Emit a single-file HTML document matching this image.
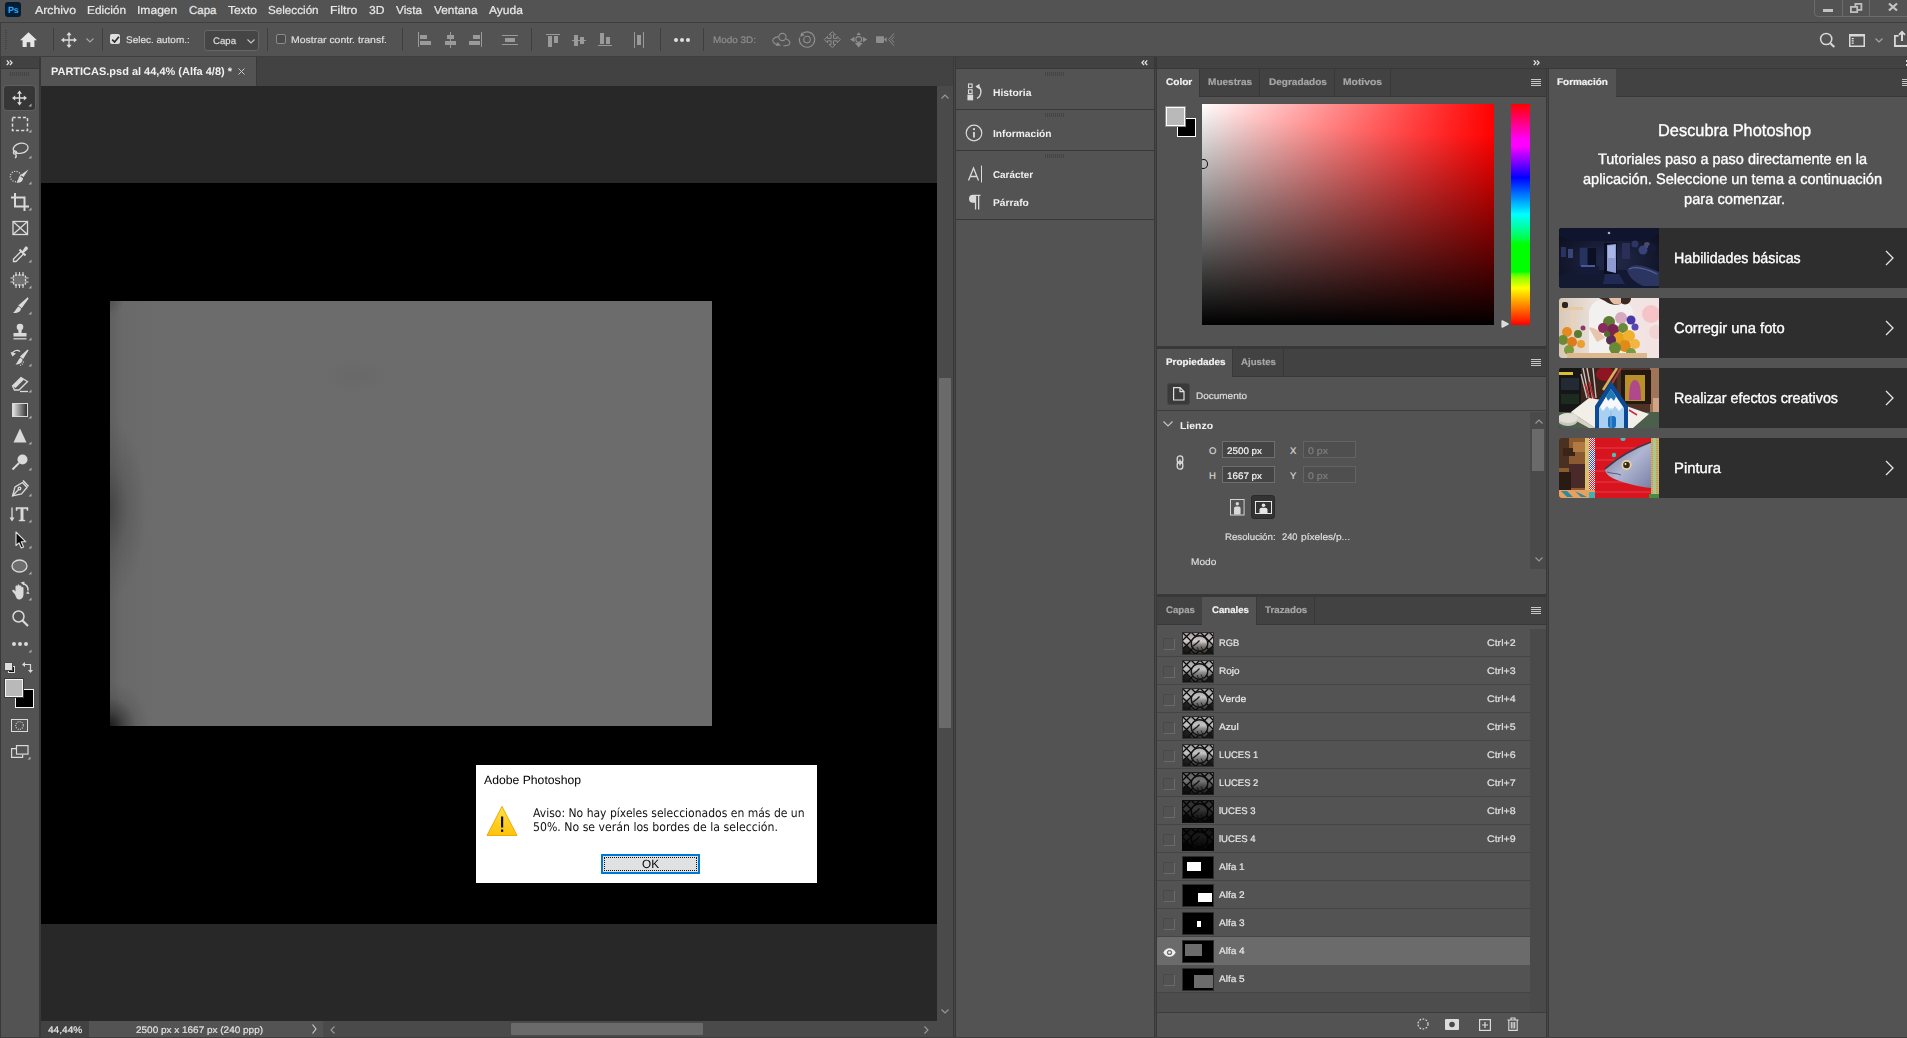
<!DOCTYPE html>
<html lang="es"><head><meta charset="utf-8"><title>PARTICAS.psd - Adobe Photoshop</title>
<style>
*{box-sizing:border-box;margin:0;padding:0}
html,body{width:1907px;height:1038px;overflow:hidden;background:#383838;font-family:"Liberation Sans",sans-serif;font-size:11px;color:#dddddd;text-rendering:geometricPrecision}
.a{position:absolute}
.t{position:absolute;white-space:nowrap;line-height:1;transform-origin:0 0}
.b{font-weight:bold}
svg{position:absolute;overflow:visible}

.menu .t{top:5.600px;font-size:11.500px;color:#e8e8e8;-webkit-text-stroke:.2px}
.sep{position:absolute;top:28px;width:1px;height:23px;background:#3f3f3f}

.grip{position:absolute;width:19px;height:4px;background:repeating-linear-gradient(to right,#444 0 1px,transparent 1px 2px)}

.card{position:absolute;left:1559px;width:348px;height:60px;background:#2e2e2e;border-radius:3px 0 0 3px}
.ct{left:1674px;font-size:15px;color:#fff;-webkit-text-stroke:.35px #fff}
.chev{left:1885px}
.th{left:1559px}
/* section styles get appended below */
</style></head><body>
<div class="a" style="left:0;top:0;width:1907px;height:22px;background:#535353"></div>
<div class="a" style="left:5px;top:2px;width:16px;height:15px;background:#001e36;border-radius:3px"></div>
<div class="t b" style="left:8px;top:6px;font-size:9px;color:#31a8ff;letter-spacing:-0.2px">Ps</div>
<div class="menu">
<span class="t" style="transform:scaleX(1.069);left:35px">Archivo</span>
<span class="t" style="transform:scaleX(1.034);left:87px">Edición</span>
<span class="t" style="transform:scaleX(1.051);left:137px">Imagen</span>
<span class="t" style="transform:scaleX(1.000);left:189px">Capa</span>
<span class="t" style="transform:scaleX(1.055);left:228px">Texto</span>
<span class="t" style="transform:scaleX(1.015);left:268px">Selección</span>
<span class="t" style="transform:scaleX(1.072);left:330px">Filtro</span>
<span class="t" style="transform:scaleX(1.054);left:369px">3D</span>
<span class="t" style="transform:scaleX(1.025);left:396px">Vista</span>
<span class="t" style="transform:scaleX(1.030);left:434px">Ventana</span>
<span class="t" style="transform:scaleX(1.049);left:489px">Ayuda</span>
</div>
<!-- window controls -->
<div class="a" style="left:1814px;top:-4px;width:98px;height:21px;border:1px solid #6c6c6c;border-radius:4px"></div>
<div class="a" style="left:1842px;top:0;width:1px;height:16px;background:#6c6c6c"></div>
<div class="a" style="left:1869px;top:0;width:1px;height:16px;background:#6c6c6c"></div>
<div class="a" style="left:1823px;top:9px;width:10px;height:3px;background:#c2c2c2"></div>
<svg style="left:1849px;top:2px" width="14" height="12" viewBox="0 0 14 12"><rect x="6.400" y="1.900" width="6" height="6" fill="none" stroke="#bebebe" stroke-width="1.800"/><rect x="1.900" y="4.900" width="6.300" height="5.200" fill="#535353" stroke="#bebebe" stroke-width="1.800"/></svg>
<svg style="left:1888px;top:3px" width="10" height="8" viewBox="0 0 10 8"><path d="M1 0.500L9 7.500M9 0.500L1 7.500" stroke="#c6c6c6" stroke-width="2.200" fill="none"/></svg>

<div class="a" style="left:0;top:22px;width:1907px;height:35px;background:#3e3e3e"></div>
<div class="a" style="left:1px;top:23px;width:1906px;height:33px;background:#535353"></div>
<div class="a" style="left:5px;top:30px;width:2px;height:20px;background:repeating-linear-gradient(to bottom,#444 0 1px,transparent 1px 2px)"></div>
<!-- home -->
<svg style="left:20px;top:32px" width="17" height="15" viewBox="0 0 17 15"><path d="M8.5 0.3L0 8.2H2.6V15H6.7V10.2H10.3V15H14.4V8.2H17Z" fill="#e6e6e6"/></svg>
<div class="sep" style="left:53px"></div>
<!-- move tool -->
<svg style="left:61px;top:32px" width="16" height="16" viewBox="0 0 16 16"><path d="M8 1.2V14.8M1.2 8H14.8" stroke="#dcdcdc" stroke-width="1.3" fill="none"/><path d="M8 0L10.6 3.2H5.4ZM8 16L10.6 12.8H5.4ZM0 8L3.2 5.4V10.6ZM16 8L12.8 5.4V10.6Z" fill="#dcdcdc"/></svg>
<svg style="left:86px;top:38px" width="8" height="5" viewBox="0 0 8 5"><path d="M0.5 0.5L4 4L7.5 0.5" stroke="#a8a8a8" stroke-width="1.1" fill="none"/></svg>
<div class="sep" style="left:102px"></div>
<div class="a" style="left:110px;top:34px;width:10px;height:10px;background:#dedede;border-radius:2px"></div>
<svg style="left:110.500px;top:34.500px" width="9" height="9" viewBox="0 0 9 9"><path d="M1.200 4.600L3.600 7L7.900 1.800" stroke="#2a2a2a" stroke-width="1.7" fill="none"/></svg>
<span class="t" style="transform:scaleX(1.050);left:126px;top:36px;font-size:9.500px;-webkit-text-stroke:.2px;color:#dedede">Selec. autom.:</span>
<div class="a" style="left:204px;top:30px;width:55px;height:21px;background:#454545;border:1px solid #666;border-radius:3px"></div>
<span class="t" style="transform:scaleX(1.012);left:213px;top:37px;font-size:9.500px;-webkit-text-stroke:.2px;color:#dedede">Capa</span>
<svg style="left:247px;top:39px" width="8" height="5" viewBox="0 0 8 5"><path d="M0.5 0.5L4 4L7.5 0.5" stroke="#c8c8c8" stroke-width="1.1" fill="none"/></svg>
<div class="sep" style="left:267px"></div>
<div class="a" style="left:276px;top:34px;width:10px;height:10px;border:1px solid #8a8a8a;border-radius:2px;background:#4a4a4a"></div>
<span class="t" style="transform:scaleX(1.102);left:291px;top:36px;font-size:9.500px;-webkit-text-stroke:.2px;color:#dedede">Mostrar contr. transf.</span>
<div class="sep" style="left:402px"></div>
<!-- align icons (dim) -->
<svg style="left:416px;top:31px" width="250" height="18" viewBox="0 0 250 18" fill="#9a9a9a">
<rect x="2" y="1" width="1" height="15"/><rect x="4" y="4" width="7" height="4"/><rect x="4" y="10" width="11" height="4"/>
<rect x="34" y="1" width="1" height="16"/><rect x="31" y="4" width="7" height="4"/><rect x="29" y="10" width="11" height="4"/>
<rect x="65" y="1" width="1" height="15"/><rect x="57" y="4" width="7" height="4"/><rect x="53" y="10" width="11" height="4"/>
<rect x="86" y="4" width="16" height="1"/><rect x="86" y="13" width="16" height="1"/><rect x="89" y="7" width="10" height="4"/>
<rect x="130" y="3" width="14" height="1"/><rect x="132" y="5" width="4" height="11"/><rect x="138" y="5" width="4" height="7"/>
<rect x="156" y="9" width="14" height="1"/><rect x="158" y="4" width="4" height="11"/><rect x="164" y="6" width="4" height="7"/>
<rect x="182" y="14" width="14" height="1"/><rect x="184" y="2" width="4" height="11"/><rect x="190" y="6" width="4" height="7"/>
<rect x="218" y="1" width="1" height="16"/><rect x="227" y="1" width="1" height="16"/><rect x="221" y="4" width="4" height="10"/>
</svg>
<div class="sep" style="left:531px"></div>
<div class="sep" style="left:660px"></div>
<div class="a" style="left:674px;top:38px;width:4px;height:4px;border-radius:2px;background:#e0e0e0;box-shadow:6px 0 0 #e0e0e0,12px 0 0 #e0e0e0"></div>
<div class="sep" style="left:703px"></div>
<span class="t" style="transform:scaleX(1.044);left:713px;top:36px;font-size:9.500px;-webkit-text-stroke:.2px;color:#8e8e8e">Modo 3D:</span>
<!-- 3D icons dim -->
<svg style="left:771px;top:31px" width="125" height="18" viewBox="0 0 125 18" fill="none" stroke="#8e8e8e" stroke-width="1.100">
<circle cx="11.400" cy="6" r="3.600"/><path d="M6.500 13.800C2.500 12.600 0.600 10 2.400 7.800C3.600 6.300 6 5.700 7.800 5.900"/><path d="M14.800 7.700C18.200 9 20 11.600 18.300 13.300C17.300 14.300 15 14.700 12.400 14.700"/><path d="M4.600 14.800H10L6.600 11Z" fill="#8e8e8e" stroke="none"/>
<circle cx="36" cy="8.600" r="3.300"/><path d="M31.200 2.600A7.700 7.700 0 1 1 28.600 6.600"/><path d="M29.200 5.800L30.200 1.600L33.600 4.200Z" fill="#8e8e8e" stroke="none"/>
<g transform="translate(61.300,8.600)"><path d="M0 -8L3.200 -4.800H1.200V-1.200H4.800V-3.200L8 0L4.800 3.200V1.200H1.200V4.800H3.200L0 8L-3.200 4.800H-1.200V1.200H-4.800V3.200L-8 0L-4.800 -3.200V-1.200H-1.200V-4.800H-3.200Z" stroke-width="1"/></g>
<g transform="translate(87.700,8.200)"><circle cx="0" cy="0.300" r="2.900"/><path d="M-8.600 0.300L-4.200 -2.400V3ZM8.600 0.300L4.200 -2.400V3ZM0 -7L2.200 -4.200H-2.200ZM0 8.300L3.900 3.900H-3.900Z" fill="#8e8e8e" stroke="none"/></g>
<rect x="105" y="5.300" width="8" height="6.600" rx="0.800" fill="#8e8e8e" stroke="none"/><path d="M113 8.600L115.600 6V11.200Z" fill="#8e8e8e" stroke="none"/><path d="M123 2.400L117.600 8.600L123 14.800M123 5.600L120.400 8.600L123 11.600" stroke-width="0.900"/>
</svg>
<!-- right icons -->
<svg style="left:1819px;top:32px" width="17" height="17" viewBox="0 0 17 17" fill="none" stroke="#d8d8d8"><circle cx="7.200" cy="7" r="5.600" stroke-width="1.500"/><path d="M11.300 11.200L15.300 15" stroke-width="2"/></svg>
<svg style="left:1849px;top:34px" width="16" height="13" viewBox="0 0 16 13" fill="none" stroke="#d8d8d8"><rect x="0.750" y="0.750" width="14.500" height="11.500" stroke-width="1.500"/><path d="M1 1.500H15" stroke-width="2"/><path d="M2.700 4.700H4.700M2.700 6.900H4.700M2.700 9.100H4.700" stroke-width="1.300" stroke="#e4e4e4"/></svg>
<svg style="left:1874.500px;top:37.500px" width="8" height="5" viewBox="0 0 8 5"><path d="M0.500 0.500L4 4L7.500 0.500" stroke="#a8a8a8" stroke-width="1.100" fill="none"/></svg>
<svg style="left:1894px;top:30px" width="14" height="17" viewBox="0 0 14 17" fill="none" stroke="#d8d8d8" stroke-width="1.800"><path d="M4.500 5.900H0.900V16H14"/><path d="M8 11V2.500" stroke-width="2"/><path d="M5 4.800L8 1.800L11 4.800" stroke-width="1.800"/></svg>

<div class="a" style="left:0;top:57px;width:41px;height:981px;background:#383838"></div>
<div class="a" style="left:1px;top:57px;width:37.500px;height:11px;background:#424242"></div>
<div class="a" style="left:1px;top:69px;width:37.500px;height:969px;background:#535353"></div>
<svg style="left:6px;top:60px" width="7" height="5.500" viewBox="0 0 8 7"><path d="M0.5 0.5L3.2 3.5L0.5 6.5M4.500 0.500L7.200 3.500L4.500 6.500" stroke="#e0e0e0" stroke-width="1.700" fill="none"/></svg>
<div class="a" style="left:10px;top:72px;width:19px;height:4px;background:repeating-linear-gradient(to right,#444 0 1px,transparent 1px 2px)"></div>
<div class="a" style="left:4px;top:86px;width:31px;height:24px;background:#363636;border-radius:3px;box-shadow:0 0 0 1px rgba(255,255,255,.07)"></div>
<svg style="left:0;top:0" width="41" height="780" viewBox="0 0 41 780"><g transform="translate(20,98)" fill="none" stroke="#dadada" stroke-width="1.300"><path d="M-0.500 -6V6M-6.500 0H5.500"/><path d="M-0.500 -7.500L2 -4.300H-3ZM-0.500 7.500L2 4.300H-3ZM-8 0L-4.800 -2.500V2.500ZM7 0L3.800 -2.500V2.500Z" fill="#dadada" stroke="none"/></g><path d="M31.500 103.5 L31.500 106.5 L28.500 106.5 Z" fill="#b0b0b0" stroke="none"/><g transform="translate(20,124)" fill="none" stroke="#dadada" stroke-width="1.300"><rect x="-7.500" y="-6.500" width="15" height="13" stroke-dasharray="3.200 2" stroke-width="1.500"/></g><path d="M31.500 129.5 L31.500 132.5 L28.500 132.5 Z" fill="#b0b0b0" stroke="none"/><g transform="translate(20,150)" fill="none" stroke="#dadada" stroke-width="1.300"><ellipse cx="1" cy="-1.500" rx="7.500" ry="5" transform="rotate(-12)"/><circle cx="-5" cy="2.500" r="1.600"/><path d="M-4.500 4C-3.500 5.500 -3.500 7 -5 8"/></g><path d="M31.500 155.5 L31.500 158.5 L28.500 158.5 Z" fill="#b0b0b0" stroke="none"/><g transform="translate(20,176)" fill="none" stroke="#dadada" stroke-width="1.300"><circle cx="-4.500" cy="0.500" r="5.200" stroke-dasharray="1.100 1.400" stroke-width="1.200"/><path d="M8.500 -6.500L3.500 1L0.500 -1Z" fill="#dadada" stroke="none"/><path d="M-0.500 0L3 2.300C3 5.500 0 7 -3.500 6.800C-1.500 5 -2 2 -0.500 0Z" fill="#dadada" stroke="none"/></g><path d="M31.500 181.5 L31.500 184.5 L28.500 184.5 Z" fill="#b0b0b0" stroke="none"/><g transform="translate(20,202)" fill="none" stroke="#dadada" stroke-width="1.300"><path d="M-5 -9V4.500H9M-9 -4.500H4.500V9" stroke-width="2"/></g><path d="M31.500 207.5 L31.500 210.5 L28.500 210.5 Z" fill="#b0b0b0" stroke="none"/><g transform="translate(20,228)" fill="none" stroke="#dadada" stroke-width="1.300"><rect x="-7" y="-6.500" width="14.500" height="13"/><path d="M-7 -6.500L7.500 6.500M7.500 -6.500L-7 6.500"/></g><g transform="translate(20,254)" fill="none" stroke="#dadada" stroke-width="1.300"><path d="M1 -2.500L-6.500 5V7.500H-4L3.500 0"/><path d="M-0.500 -4.500L5.500 1.500" stroke-width="2"/><path d="M2 -2.500L5 -7C6.500 -8.500 9 -6 7.500 -4.500L3.500 -1Z" fill="#dadada" stroke="none"/></g><path d="M31.500 259.5 L31.500 262.5 L28.500 262.5 Z" fill="#b0b0b0" stroke="none"/><g transform="translate(20,280)" fill="none" stroke="#dadada" stroke-width="1.300"><rect x="-6.500" y="-5" width="12" height="10" rx="1.500" fill="#707070" stroke-dasharray="2.200 1.200"/><path d="M-4 -8V-5M-0.500 -8V-5M3 -8V-5M-4 5V8M-0.500 5V8M3 5V8M-9.500 -2H-6.500M-9.500 2H-6.500M5.500 -2H8.500M5.500 2H8.500" stroke-width="1.100"/></g><path d="M31.500 285.5 L31.500 288.5 L28.500 288.5 Z" fill="#b0b0b0" stroke="none"/><g transform="translate(20,306)" fill="none" stroke="#dadada" stroke-width="1.300"><path d="M8 -8L1.500 1L-0.500 -0.500Z" stroke-width="1.600" fill="#dadada"/><path d="M-1.500 0.500L1 2.500C1 5.500 -2.500 7.500 -7 7C-4.500 5.500 -4 2 -1.500 0.500Z" fill="#dadada" stroke="none"/></g><path d="M31.500 311.5 L31.500 314.5 L28.500 314.5 Z" fill="#b0b0b0" stroke="none"/><g transform="translate(20,332)" fill="none" stroke="#dadada" stroke-width="1.300"><circle cx="0" cy="-5" r="3.300" fill="#dadada" stroke="none"/><path d="M-1.800 -3H1.800L1.500 1H6.500V4.500H-6.500V1H-1.500Z" fill="#dadada" stroke="none"/><path d="M-6.500 6.800H6.500" stroke-width="1.300"/></g><path d="M31.500 337.5 L31.500 340.5 L28.500 340.5 Z" fill="#b0b0b0" stroke="none"/><g transform="translate(20,358)" fill="none" stroke="#dadada" stroke-width="1.300"><path d="M8 -8L3 0L1 -1.500Z" fill="#dadada"/><path d="M0.500 -0.500L2.500 1.500C2.500 4.500 -0.500 6.500 -4.500 6.500C-2.500 5 -2 1.500 0.500 -0.500Z" fill="#dadada" stroke="none"/><path d="M-8 -3.500A5 5 0 0 1 0 -6.500" /><path d="M-9.500 -6L-7.500 -1.500L-4 -4.500Z" fill="#dadada" stroke="none"/><path d="M3.500 3.500A5.500 5.500 0 0 1 0 7.500" stroke-dasharray="1 1.200"/></g><path d="M31.500 363.5 L31.500 366.5 L28.500 366.5 Z" fill="#b0b0b0" stroke="none"/><g transform="translate(20,384)" fill="none" stroke="#dadada" stroke-width="1.300"><path d="M-7.500 2L1 -6.500L7.500 -2.500L-1 6H-5.500Z"/><path d="M-7.500 2L1 -6.500L4 -4.500L-4.500 4Z" fill="#dadada" stroke="none"/><path d="M0 7.500H8" /></g><path d="M31.500 389.5 L31.500 392.5 L28.500 392.5 Z" fill="#b0b0b0" stroke="none"/><defs><linearGradient id="tg" x1="0" x2="1"><stop offset="0" stop-color="#e8e8e8"/><stop offset="1" stop-color="#2c2c2c"/></linearGradient></defs><rect x="12.500" y="403.500" width="15" height="13" fill="url(#tg)" stroke="#dadada" stroke-width="1"/><path d="M31.500 415.5 L31.500 418.5 L28.500 418.5 Z" fill="#b0b0b0" stroke="none"/><g transform="translate(20,436)" fill="none" stroke="#dadada" stroke-width="1.300"><path d="M0 -7.500L6.500 6.500H-6.500Z" fill="#dadada" stroke="none"/></g><path d="M31.500 441.5 L31.500 444.5 L28.500 444.5 Z" fill="#b0b0b0" stroke="none"/><g transform="translate(20,462)" fill="none" stroke="#dadada" stroke-width="1.300"><circle cx="2.500" cy="-2.500" r="5" fill="#dadada" stroke="none"/><path d="M-1 1L-7.500 7.500" stroke-width="2"/></g><path d="M31.500 467.5 L31.500 470.5 L28.500 470.5 Z" fill="#b0b0b0" stroke="none"/><g transform="translate(20,488)" fill="none" stroke="#dadada" stroke-width="1.300"><path d="M-7.500 8L-5 -1L2.500 -5.500L7 -0.500L1.500 6L-7.500 8Z"/><path d="M-7.500 8L-1.500 1.500"/><circle cx="-0.500" cy="0.500" r="1.300"/><path d="M3 -7.500L8.500 -1.500" stroke-width="1.600"/></g><path d="M31.500 493.5 L31.500 496.5 L28.500 496.5 Z" fill="#b0b0b0" stroke="none"/><g transform="translate(20,514)" fill="none" stroke="#dadada" stroke-width="1.300"><path d="M-4 -6.500H8V-3.500H7C7 -5 6.500 -5.200 5.500 -5.200H3.200V5C3.200 6 3.500 6.200 5 6.200V7H-1V6.200C0.500 6.200 0.800 6 0.800 5V-5.200H-1.500C-2.500 -5.200 -3 -5 -3 -3.500H-4Z" fill="#dadada" stroke="#dadada" stroke-width="0.500"/><path d="M-8 -6.500V5.500"/><path d="M-10.500 3.500L-8 7.500L-5.500 3.500Z" fill="#dadada" stroke="none"/></g><path d="M31.500 519.5 L31.500 522.5 L28.500 522.5 Z" fill="#b0b0b0" stroke="none"/><g transform="translate(20,540)" fill="none" stroke="#dadada" stroke-width="1.300"><path d="M-4 -8V5.500L-1 2.800L1.300 8L3.600 7L1.300 1.800H5.800Z" fill="#0c0c0c" stroke="#e0e0e0" stroke-width="1.100" stroke-linejoin="round"/></g><path d="M31.500 545.5 L31.500 548.5 L28.500 548.5 Z" fill="#b0b0b0" stroke="none"/><g transform="translate(20,566)" fill="none" stroke="#dadada" stroke-width="1.300"><ellipse cx="-0.500" cy="0" rx="7.500" ry="6" fill="#6e6e6e"/></g><path d="M31.500 571.5 L31.500 574.5 L28.500 574.5 Z" fill="#b0b0b0" stroke="none"/><g transform="translate(20,592)" fill="none" stroke="#dadada" stroke-width="1.300"><path d="M-5 2.500L-7.500 -0.500C-8.500 -1.500 -7 -3 -6 -2L-4.500 -0.500V-5.500C-4.500 -7 -2.500 -7 -2.500 -5.500V-6.500C-2.500 -8 -0.500 -8 -0.500 -6.500V-5.500C-0.500 -7 1.500 -7 1.500 -5.500V-4C1.500 -5.500 3.500 -5.500 3.500 -4V2C3.500 5 2 7.500 -1 7.500C-3.500 7.500 -4 4.500 -5 2.500Z" fill="#dadada" stroke="none"/><path d="M3 -8.500A7 7 0 0 1 8 -1.500" stroke-width="1.500"/><path d="M0.500 -9.500L4.500 -10.500L4 -6.500Z" fill="#dadada" stroke="none"/><path d="M8 -1L9.500 2L6 1.500Z" fill="#dadada" stroke="none"/></g><path d="M31.500 597.5 L31.500 600.5 L28.500 600.5 Z" fill="#b0b0b0" stroke="none"/><g transform="translate(20,618)" fill="none" stroke="#dadada" stroke-width="1.300"><circle cx="-1.500" cy="-1.500" r="5.500" stroke-width="1.500"/><path d="M2.500 2.500L8 8" stroke-width="2.200"/></g><g transform="translate(20,644)" fill="none" stroke="#dadada" stroke-width="1.300"><circle cx="-6" cy="0" r="2" fill="#dadada" stroke="none"/><circle cx="0" cy="0" r="2" fill="#dadada" stroke="none"/><circle cx="6" cy="0" r="2" fill="#dadada" stroke="none"/></g><path d="M31.500 649.5 L31.500 652.5 L28.500 652.5 Z" fill="#b0b0b0" stroke="none"/></svg>
<div class="a" style="left:8px;top:666px;width:7px;height:7px;background:#111;border:1px solid #ddd"></div>
<div class="a" style="left:5px;top:663px;width:7px;height:7px;background:#dcdcdc;box-shadow:0 0 0 1px #4a4a4a"></div>
<svg style="left:22px;top:662px" width="11" height="11" viewBox="0 0 11 11" fill="none" stroke="#dadada" stroke-width="1.200"><path d="M2.500 2.500H8.500V8.500"/><path d="M0 2.500L3 0V5Z" fill="#dadada" stroke="none"/><path d="M8.500 11L6 8H11Z" fill="#dadada" stroke="none"/></svg>
<div class="a" style="left:15px;top:689px;width:19px;height:19px;background:#000;border:1px solid #f4f4f4"></div>
<div class="a" style="left:5px;top:679px;width:18px;height:18px;background:#b9b9b9;border:1px solid #f4f4f4;box-shadow:0 0 0 1px #3a3a3a"></div>
<svg style="left:11px;top:719px" width="17" height="13" viewBox="0 0 17 13" fill="none" stroke="#dadada"><rect x="0.500" y="0.500" width="16" height="12" stroke-width="1"/><circle cx="8.500" cy="6.500" r="3.800" stroke-dasharray="1 1.200" stroke-width="1.100"/></svg>
<svg style="left:11px;top:745px" width="20" height="15" viewBox="0 0 20 15" fill="none" stroke="#dadada" stroke-width="1.200"><path d="M5 3.600H0.600V12.400H11.600V9.500"/><rect x="5.500" y="0.600" width="11.500" height="8.500" fill="#535353"/><path d="M19.500 11.500V14.500H16.500Z" fill="#b0b0b0" stroke="none"/></svg>

<!-- document window -->
<div class="a" style="left:41px;top:57px;width:912px;height:29px;background:#424242"></div>
<div class="a" style="left:41px;top:57px;width:215px;height:29px;background:#535353"></div>
<div class="a" style="left:256px;top:57px;width:1px;height:28px;background:#383838"></div>
<span class="t b" style="transform:scaleX(0.998);left:51px;top:67px;font-size:11px;color:#f0f0f0">PARTICAS.psd al 44,4% (Alfa 4/8) *</span>
<svg style="left:238px;top:68px" width="7" height="7" viewBox="0 0 7 7"><path d="M0.500 0.500L6.500 6.500M6.500 0.500L0.500 6.500" stroke="#c8c8c8" stroke-width="1" fill="none"/></svg>
<div class="a" style="left:41px;top:86px;width:896px;height:935px;background:#282828"></div>
<div class="a" style="left:41px;top:183px;width:896px;height:741px;background:#000"></div>
<div class="a" style="left:110px;top:301px;width:602px;height:425px;background:#6c6c6c;overflow:hidden">
  <div class="a" style="left:0;top:0;width:50px;height:425px;background:linear-gradient(to right,rgba(60,60,60,.26),rgba(80,80,80,.10) 12px,rgba(100,100,100,0) 48px)"></div>
  <div class="a" style="left:-36px;top:118px;width:72px;height:180px;border-radius:50%;background:radial-gradient(closest-side,rgba(40,40,40,.5),rgba(60,60,60,.24) 50%,rgba(90,90,90,0))"></div>
  <div class="a" style="left:-40px;top:381px;width:80px;height:88px;border-radius:50%;background:radial-gradient(closest-side,rgba(15,15,15,.85),rgba(40,40,40,.55) 35%,rgba(60,60,60,.2) 65%,rgba(90,90,90,0))"></div>
  <div class="a" style="left:-14px;top:-14px;width:28px;height:28px;border-radius:50%;background:radial-gradient(closest-side,rgba(60,60,60,.4),rgba(80,80,80,0))"></div>
  <div class="a" style="left:210px;top:58px;width:70px;height:34px;border-radius:50%;background:radial-gradient(closest-side,rgba(102,102,102,.6),rgba(104,104,104,0))"></div>
</div>
<!-- vertical scrollbar -->
<div class="a" style="left:937px;top:86px;width:16px;height:935px;background:#4a4a4a"></div>
<svg style="left:941px;top:93.500px" width="8" height="5" viewBox="0 0 8 5"><path d="M0.500 4.500L4 1L7.500 4.500" stroke="#9a9a9a" stroke-width="1.100" fill="none"/></svg>
<svg style="left:941px;top:1009px" width="8" height="5" viewBox="0 0 8 5"><path d="M0.500 0.500L4 4L7.500 0.500" stroke="#9a9a9a" stroke-width="1.100" fill="none"/></svg>
<div class="a" style="left:939px;top:378px;width:12px;height:350px;background:#6a6a6a;border-radius:1px"></div>
<!-- status bar -->
<div class="a" style="left:41px;top:1021px;width:912px;height:17px;background:#4a4a4a"></div>
<div class="a" style="left:41px;top:1021px;width:48px;height:17px;background:#424242"></div>
<div class="a" style="left:89px;top:1021px;width:234px;height:17px;background:#535353"></div>
<span class="t" style="transform:scaleX(1.064);left:48px;top:1026px;font-size:9.500px;-webkit-text-stroke:.2px;color:#e6e6e6">44,44%</span>
<span class="t" style="transform:scaleX(1.050);left:136px;top:1026px;font-size:9.500px;-webkit-text-stroke:.2px;color:#e0e0e0">2500 px x 1667 px (240 ppp)</span>
<svg style="left:312px;top:1024px" width="5" height="10" viewBox="0 0 5 10"><path d="M0.500 0.500L4 5L0.500 9.500" stroke="#d0d0d0" stroke-width="1.100" fill="none"/></svg>
<svg style="left:330px;top:1026px" width="5" height="8" viewBox="0 0 5 8"><path d="M4.500 0.500L1 4L4.500 7.500" stroke="#9a9a9a" stroke-width="1.100" fill="none"/></svg>
<svg style="left:924px;top:1026px" width="5" height="8" viewBox="0 0 5 8"><path d="M0.500 0.500L4 4L0.500 7.500" stroke="#9a9a9a" stroke-width="1.100" fill="none"/></svg>
<div class="a" style="left:511px;top:1023px;width:192px;height:12px;background:#6a6a6a;border-radius:1px"></div>
<div class="a" style="left:954px;top:57px;width:1px;height:981px;background:#464646"></div>

<!-- collapsed icon dock -->
<div class="a" style="left:956px;top:57px;width:198px;height:11px;background:#424242"></div>
<svg style="left:1141px;top:60px" width="7" height="5.500" viewBox="0 0 8 7"><path d="M3.500 0.500L0.800 3.500L3.500 6.500M7.500 0.500L4.800 3.500L7.500 6.500" stroke="#e0e0e0" stroke-width="1.700" fill="none"/></svg>
<div class="a" style="left:956px;top:69px;width:198px;height:969px;background:#535353"></div>
<div class="a" style="left:956px;top:109px;width:198px;height:1px;background:#383838"></div>
<div class="a" style="left:956px;top:150px;width:198px;height:1px;background:#383838"></div>
<div class="a" style="left:956px;top:219px;width:198px;height:1px;background:#383838"></div>
<div class="grip" style="left:1045px;top:72px"></div>
<div class="grip" style="left:1045px;top:113px"></div>
<div class="grip" style="left:1045px;top:154px"></div>
<!-- historia icon -->
<svg style="left:967px;top:83px" width="17" height="18" viewBox="0 0 17 18" fill="none" stroke="#dadada" stroke-width="1.100"><rect x="1.500" y="1" width="3.600" height="3.600"/><rect x="1.500" y="6.800" width="3.600" height="3.600"/><rect x="1" y="12.200" width="4.600" height="4.600" fill="#dadada"/><path d="M9.500 3.500C13.500 3.500 15.500 8 12.500 13.500L10 15.500" stroke-width="1.300"/><path d="M8.500 3.500L12.500 0.800V6.200Z" fill="#dadada" stroke="none"/></svg>
<span class="t b" style="transform:scaleX(1.031);left:993px;top:89px;font-size:10px;color:#f0f0f0">Historia</span>
<svg style="left:965px;top:124px" width="18" height="18" viewBox="0 0 18 18" fill="none" stroke="#dadada" stroke-width="1.200"><circle cx="9" cy="9" r="7.800"/><path d="M9 8V13.500" stroke-width="1.800"/><circle cx="9" cy="5.200" r="1.100" fill="#dadada" stroke="none"/></svg>
<span class="t b" style="transform:scaleX(1.022);left:993px;top:130px;font-size:10px;color:#f0f0f0">Información</span>
<svg style="left:967px;top:165px" width="17" height="18" viewBox="0 0 17 18" fill="none" stroke="#dadada" stroke-width="1.300"><path d="M1.500 15.500L6.500 3L11.500 15.500M3.200 11.500H9.800"/><path d="M14.500 0.500V17.500" stroke-width="1"/></svg>
<span class="t b" style="transform:scaleX(0.985);left:993px;top:171px;font-size:10px;color:#f0f0f0">Carácter</span>
<svg style="left:968px;top:193.500px" width="14" height="16" viewBox="0 0 14 16" fill="#dadada" stroke="none"><path d="M5 0.800H12.500V2.100H11.300V15.500H10V2.100H8.200V15.500H6.900V8.800H5A4 4 0 0 1 5 0.800Z"/></svg>
<span class="t b" style="transform:scaleX(1.022);left:993px;top:199px;font-size:10px;color:#f0f0f0">Párrafo</span>
<div class="a" style="left:1155px;top:69px;width:1px;height:969px;background:#464646"></div>
<div class="a" style="left:1547px;top:69px;width:1px;height:969px;background:#464646"></div>

<div class="a" style="left:1157px;top:57px;width:750px;height:11px;background:#424242"></div>
<svg style="left:1533px;top:60px" width="7" height="5.500" viewBox="0 0 8 7"><path d="M0.500 0.500L3.200 3.500L0.500 6.500M4.500 0.500L7.200 3.500L4.500 6.500" stroke="#e0e0e0" stroke-width="1.700" fill="none"/></svg>
<div class="a" style="left:1157px;top:69px;width:389px;height:27px;background:#424242"></div>
<div class="a" style="left:1157px;top:97px;width:389px;height:249px;background:#535353"></div>
<div class="a" style="left:1157px;top:69px;width:42px;height:28px;background:#535353"></div>
<div class="a" style="left:1199px;top:69px;width:1px;height:27px;background:#383838"></div>
<span class="t b" style="transform:scaleX(1.060);left:1166px;top:78px;font-size:9.500px;-webkit-text-stroke:.2px;color:#f0f0f0">Color</span>
<div class="a" style="left:1259px;top:69px;width:1px;height:27px;background:#383838"></div>
<span class="t b" style="transform:scaleX(1.059);left:1208px;top:78px;font-size:9.500px;-webkit-text-stroke:.2px;color:#a6a6a6">Muestras</span>
<div class="a" style="left:1334px;top:69px;width:1px;height:27px;background:#383838"></div>
<span class="t b" style="transform:scaleX(1.055);left:1269px;top:78px;font-size:9.500px;-webkit-text-stroke:.2px;color:#a6a6a6">Degradados</span>
<div class="a" style="left:1390px;top:69px;width:1px;height:27px;background:#383838"></div>
<span class="t b" style="transform:scaleX(1.087);left:1343px;top:78px;font-size:9.500px;-webkit-text-stroke:.2px;color:#a6a6a6">Motivos</span>
<div class="a" style="left:1531px;top:79px;width:10px;height:7px;background:repeating-linear-gradient(to bottom,#c8c8c8 0 1px,transparent 1px 2px)"></div>
<div class="a" style="left:1177px;top:118px;width:19px;height:19px;background:#000;border:1px solid #fff"></div>
<div class="a" style="left:1165px;top:106px;width:21px;height:21px;background:#b9b9b9;border:1px solid #8c8c8c;box-shadow:inset 0 0 0 1px #fff"></div>
<svg width="0" height="0" style="left:0;top:0"><defs><filter id="cm" x="0" y="0" width="1" height="1" color-interpolation-filters="linearRGB"><feColorMatrix type="matrix" values="1.3984 -0.3984 0 0 0  0 1 0 0 0  0 -0.0429 1.0429 0 0  0 0 0 1 0"/></filter></defs></svg>
<div class="a" style="left:1202px;top:104px;width:292px;height:221px;background:linear-gradient(to bottom,rgba(0,0,0,0),#000),linear-gradient(to right,#fff,#f00);filter:url(#cm)"></div>
<div class="a" style="left:1199px;top:159px;width:9px;height:10px;border:1px solid #111;border-radius:50%;clip-path:inset(0 0 0 3px)"></div>
<div class="a" style="left:1511px;top:104px;width:19px;height:221px;background:linear-gradient(to bottom,#f00 0%,#f0f 16.700%,#00f 33.300%,#0ff 50%,#0f0 66.700%,#ff0 83.300%,#f00 100%);filter:url(#cm)"></div>
<svg style="left:1501px;top:320px" width="8" height="8" viewBox="0 0 8 8"><path d="M1.200 1L7 4L1.200 7Z" fill="#dcdcdc" stroke="#dcdcdc" stroke-width="1.600" stroke-linejoin="round"/></svg>
<div class="a" style="left:1157px;top:349px;width:389px;height:27px;background:#424242"></div>
<div class="a" style="left:1157px;top:377px;width:389px;height:217px;background:#535353"></div>
<div class="a" style="left:1157px;top:349px;width:75px;height:28px;background:#535353"></div>
<div class="a" style="left:1232px;top:349px;width:1px;height:27px;background:#383838"></div>
<span class="t b" style="transform:scaleX(1.045);left:1166px;top:358px;font-size:9.500px;-webkit-text-stroke:.2px;color:#f0f0f0">Propiedades</span>
<div class="a" style="left:1283px;top:349px;width:1px;height:27px;background:#383838"></div>
<span class="t b" style="transform:scaleX(1.020);left:1241px;top:358px;font-size:9.500px;-webkit-text-stroke:.2px;color:#a6a6a6">Ajustes</span>
<div class="a" style="left:1531px;top:359px;width:10px;height:7px;background:repeating-linear-gradient(to bottom,#c8c8c8 0 1px,transparent 1px 2px)"></div>
<div class="a" style="left:1167px;top:383px;width:23px;height:22px;background:#3a3a3a;border-radius:3px;border:1px solid #454545"></div>
<svg style="left:1173px;top:387px" width="12" height="14" viewBox="0 0 12 14" fill="none" stroke="#e0e0e0" stroke-width="1.200"><path d="M0.600 0.600H7L11 4.600V13H0.600Z"/><path d="M7 0.600V4.600H11"/></svg>
<span class="t" style="transform:scaleX(1.050);left:1196px;top:392px;font-size:9.500px;-webkit-text-stroke:.2px;color:#dcdcdc">Documento</span>
<div class="a" style="left:1157px;top:410px;width:389px;height:1px;background:#3c3c3c"></div>
<svg style="left:1163px;top:421px" width="10" height="6" viewBox="0 0 10 6"><path d="M0.500 0.500L5 5L9.500 0.500" stroke="#c8c8c8" stroke-width="1.100" fill="none"/></svg>
<span class="t b" style="transform:scaleX(1.042);left:1180px;top:422px;font-size:10px;color:#f0f0f0">Lienzo</span>
<div class="a" style="left:1530px;top:412px;width:16px;height:157px;background:#4a4a4a"></div>
<div class="a" style="left:1532px;top:429px;width:12px;height:42px;background:#6a6a6a"></div>
<svg style="left:1535px;top:419px" width="8" height="5" viewBox="0 0 8 5"><path d="M0.500 4.500L4 1L7.500 4.500" stroke="#9a9a9a" stroke-width="1.100" fill="none"/></svg>
<svg style="left:1535px;top:557px" width="8" height="5" viewBox="0 0 8 5"><path d="M0.500 0.500L4 4L7.500 0.500" stroke="#9a9a9a" stroke-width="1.100" fill="none"/></svg>
<span class="t" style="left:1209px;top:447px;font-size:9.500px;-webkit-text-stroke:.2px;color:#d6d6d6">O</span>
<div class="a" style="left:1222px;top:441px;width:53px;height:17px;border:1px solid #6e6e6e;background:#454545"></div>
<span class="t" style="transform:scaleX(1.035);left:1227px;top:447px;font-size:9.500px;-webkit-text-stroke:.2px;color:#f2f2f2">2500 px</span>
<span class="t" style="left:1290px;top:447px;font-size:9.500px;-webkit-text-stroke:.2px;color:#d6d6d6">X</span>
<div class="a" style="left:1303px;top:441px;width:53px;height:17px;border:1px solid #636363;background:#4f4f4f"></div>
<span class="t" style="transform:scaleX(1.113);left:1308px;top:447px;font-size:9.500px;-webkit-text-stroke:.2px;color:#7e7e7e">0 px</span>
<span class="t" style="left:1209px;top:472px;font-size:9.500px;-webkit-text-stroke:.2px;color:#d6d6d6">H</span>
<div class="a" style="left:1222px;top:466px;width:53px;height:17px;border:1px solid #6e6e6e;background:#454545"></div>
<span class="t" style="transform:scaleX(1.035);left:1227px;top:472px;font-size:9.500px;-webkit-text-stroke:.2px;color:#f2f2f2">1667 px</span>
<span class="t" style="left:1290px;top:472px;font-size:9.500px;-webkit-text-stroke:.2px;color:#d6d6d6">Y</span>
<div class="a" style="left:1303px;top:466px;width:53px;height:17px;border:1px solid #636363;background:#4f4f4f"></div>
<span class="t" style="transform:scaleX(1.113);left:1308px;top:472px;font-size:9.500px;-webkit-text-stroke:.2px;color:#7e7e7e">0 px</span>
<svg style="left:1176px;top:455px" width="8" height="15" viewBox="0 0 8 15" fill="none" stroke="#dcdcdc" stroke-width="1.300"><rect x="1.200" y="0.800" width="5.600" height="7.500" rx="2.800"/><rect x="1.200" y="6.700" width="5.600" height="7.500" rx="2.800"/><path d="M4 4.500V10.500" stroke-width="1.400"/></svg>
<svg style="left:1229.500px;top:498.500px" width="15" height="16.500" viewBox="0 0 16 17" preserveAspectRatio="none"><rect x="0.500" y="0.500" width="14.500" height="16" fill="none" stroke="#d8d8d8" stroke-width="1"/><circle cx="7.800" cy="5" r="1.800" fill="#d8d8d8"/><path d="M4.300 16V10C4.300 8.500 5.300 7.800 6.300 7.800H9.300C10.300 7.800 11.300 8.500 11.300 10V16Z" fill="#d8d8d8"/></svg>
<div class="a" style="left:1251px;top:495px;width:24px;height:24px;background:#333;border-radius:3px;border:1px solid #2a2a2a"></div>
<svg style="left:1255px;top:501px" width="17" height="13" viewBox="0 0 17 13"><rect x="0.500" y="0.500" width="16" height="12" fill="none" stroke="#e6e6e6" stroke-width="1"/><circle cx="8.500" cy="4.300" r="1.800" fill="#e6e6e6"/><path d="M4.500 12V9C4.500 7.500 5.500 6.800 6.500 6.800H10.500C11.500 6.800 12.500 7.500 12.500 9V12Z" fill="#e6e6e6"/></svg>
<span class="t" style="transform:scaleX(1.019);left:1225px;top:533px;font-size:9.500px;-webkit-text-stroke:.2px;color:#dcdcdc">Resolución:</span>
<span class="t" style="transform:scaleX(0.977);left:1282px;top:533px;font-size:9.500px;-webkit-text-stroke:.2px;color:#dcdcdc">240</span>
<span class="t" style="transform:scaleX(1.066);left:1301px;top:533px;font-size:9.500px;-webkit-text-stroke:.2px;color:#dcdcdc">píxeles/p...</span>
<span class="t" style="transform:scaleX(1.065);left:1191px;top:558px;font-size:9.500px;-webkit-text-stroke:.2px;color:#dcdcdc">Modo</span>
<div class="a" style="left:1157px;top:597px;width:389px;height:27px;background:#424242"></div>
<div class="a" style="left:1157px;top:625px;width:389px;height:413px;background:#535353"></div>
<div class="a" style="left:1202px;top:597px;width:1px;height:27px;background:#383838"></div>
<span class="t b" style="transform:scaleX(1.010);left:1166px;top:606px;font-size:9.500px;-webkit-text-stroke:.2px;color:#a6a6a6">Capas</span>
<div class="a" style="left:1202px;top:597px;width:54px;height:28px;background:#535353"></div>
<div class="a" style="left:1256px;top:597px;width:1px;height:27px;background:#383838"></div>
<span class="t b" style="transform:scaleX(1.010);left:1212px;top:606px;font-size:9.500px;-webkit-text-stroke:.2px;color:#f0f0f0">Canales</span>
<div class="a" style="left:1314px;top:597px;width:1px;height:27px;background:#383838"></div>
<span class="t b" style="transform:scaleX(1.027);left:1265px;top:606px;font-size:9.500px;-webkit-text-stroke:.2px;color:#a6a6a6">Trazados</span>
<div class="a" style="left:1531px;top:607px;width:10px;height:7px;background:repeating-linear-gradient(to bottom,#c8c8c8 0 1px,transparent 1px 2px)"></div>
<div class="a" style="left:1530px;top:629px;width:16px;height:383px;background:#4a4a4a"></div>
<div class="a" style="left:1157px;top:993px;width:373px;height:19px;background:#4d4d4d"></div>
<div class="a" style="left:1157px;top:1012px;width:389px;height:1px;background:#3c3c3c"></div>
<svg width="0" height="0" style="left:0;top:0"><defs>
<linearGradient id="sky" x1="0" y1="0" x2="0" y2="1"><stop offset="0" stop-color="#9a9a9a"/><stop offset="0.400" stop-color="#c4c4c4"/><stop offset="0.550" stop-color="#8c8c8c"/><stop offset="0.750" stop-color="#5a5a5a"/><stop offset="1" stop-color="#1c1c1c"/></linearGradient>
<linearGradient id="skyc" x1="0" y1="0" x2="0" y2="1"><stop offset="0" stop-color="#a0949c"/><stop offset="0.400" stop-color="#d6ccc8"/><stop offset="0.550" stop-color="#8a8c90"/><stop offset="0.750" stop-color="#5c5648"/><stop offset="1" stop-color="#1c1c1a"/></linearGradient>
<pattern id="fence" width="9" height="9" patternUnits="userSpaceOnUse"><path d="M-1 -1L10 10M10 -1L-1 10" stroke="#0a0a0a" stroke-width="1.300"/></pattern>
<mask id="hole"><rect width="32" height="23" fill="#fff"/><ellipse cx="17.500" cy="11.500" rx="8" ry="7.500" fill="#000"/></mask>
<symbol id="th" viewBox="0 0 32 23"><rect width="32" height="23" fill="url(#sky)"/><rect width="32" height="23" fill="url(#fence)" mask="url(#hole)"/><path d="M0 16C3 13 6 14 8 18L10 23H0ZM22 23L26 17C28 15 30 16 32 14V23Z" fill="#141414" opacity=".85"/><ellipse cx="17.500" cy="11.500" rx="8.300" ry="7.800" fill="none" stroke="#141414" stroke-width="1.500"/><path d="M10.500 14.500L15 11L17.500 8.500" stroke="#1a1a1a" stroke-width="1.400" fill="none"/><path d="M15 15L17 19M19 14.500L21 18.500" stroke="#222" stroke-width="1"/><rect x="0.500" y="0.500" width="31" height="22" fill="none" stroke="#303030"/></symbol>
<symbol id="thc" viewBox="0 0 32 23"><rect width="32" height="23" fill="url(#skyc)"/><rect width="32" height="23" fill="url(#fence)" mask="url(#hole)"/><path d="M0 16C3 13 6 14 8 18L10 23H0ZM22 23L26 17C28 15 30 16 32 14V23Z" fill="#141414" opacity=".85"/><ellipse cx="17.500" cy="11.500" rx="8.300" ry="7.800" fill="none" stroke="#141414" stroke-width="1.500"/><path d="M10.500 14.500L15 11L17.500 8.500" stroke="#1a1a1a" stroke-width="1.400" fill="none"/><path d="M15 15L17 19M19 14.500L21 18.500" stroke="#222" stroke-width="1"/><rect x="0.500" y="0.500" width="31" height="22" fill="none" stroke="#303030"/></symbol>
</defs></svg>
<div class="a" style="left:1157px;top:656px;width:373px;height:1px;background:#454545"></div>
<div class="a" style="left:1163px;top:638px;width:12px;height:12px;border:1px solid #6a6a6a;border-top-color:#494949;border-left-color:#494949;background:#525252"></div>
<svg style="left:1182px;top:632px" width="32" height="23"><use href="#thc"/></svg>
<span class="t" style="transform:scaleX(0.986);left:1219px;top:639px;font-size:9.500px;-webkit-text-stroke:.2px;color:#e6e6e6">RGB</span>
<span class="t" style="transform:scaleX(1.117);left:1487px;top:639px;font-size:9.500px;-webkit-text-stroke:.2px;color:#e0e0e0">Ctrl+2</span>
<div class="a" style="left:1157px;top:684px;width:373px;height:1px;background:#454545"></div>
<div class="a" style="left:1163px;top:666px;width:12px;height:12px;border:1px solid #6a6a6a;border-top-color:#494949;border-left-color:#494949;background:#525252"></div>
<svg style="left:1182px;top:660px" width="32" height="23"><use href="#th"/></svg>
<span class="t" style="transform:scaleX(1.049);left:1219px;top:667px;font-size:9.500px;-webkit-text-stroke:.2px;color:#e6e6e6">Rojo</span>
<span class="t" style="transform:scaleX(1.117);left:1487px;top:667px;font-size:9.500px;-webkit-text-stroke:.2px;color:#e0e0e0">Ctrl+3</span>
<div class="a" style="left:1157px;top:712px;width:373px;height:1px;background:#454545"></div>
<div class="a" style="left:1163px;top:694px;width:12px;height:12px;border:1px solid #6a6a6a;border-top-color:#494949;border-left-color:#494949;background:#525252"></div>
<svg style="left:1182px;top:688px" width="32" height="23"><use href="#th"/></svg>
<span class="t" style="transform:scaleX(1.100);left:1219px;top:695px;font-size:9.500px;-webkit-text-stroke:.2px;color:#e6e6e6">Verde</span>
<span class="t" style="transform:scaleX(1.117);left:1487px;top:695px;font-size:9.500px;-webkit-text-stroke:.2px;color:#e0e0e0">Ctrl+4</span>
<div class="a" style="left:1157px;top:740px;width:373px;height:1px;background:#454545"></div>
<div class="a" style="left:1163px;top:722px;width:12px;height:12px;border:1px solid #6a6a6a;border-top-color:#494949;border-left-color:#494949;background:#525252"></div>
<svg style="left:1182px;top:716px" width="32" height="23"><use href="#th"/></svg>
<span class="t" style="transform:scaleX(1.071);left:1219px;top:723px;font-size:9.500px;-webkit-text-stroke:.2px;color:#e6e6e6">Azul</span>
<span class="t" style="transform:scaleX(1.117);left:1487px;top:723px;font-size:9.500px;-webkit-text-stroke:.2px;color:#e0e0e0">Ctrl+5</span>
<div class="a" style="left:1157px;top:768px;width:373px;height:1px;background:#454545"></div>
<div class="a" style="left:1163px;top:750px;width:12px;height:12px;border:1px solid #6a6a6a;border-top-color:#494949;border-left-color:#494949;background:#525252"></div>
<svg style="left:1182px;top:744px" width="32" height="23"><use href="#th"/></svg>
<span class="t" style="transform:scaleX(0.992);left:1219px;top:751px;font-size:9.500px;-webkit-text-stroke:.2px;color:#e6e6e6">LUCES 1</span>
<span class="t" style="transform:scaleX(1.117);left:1487px;top:751px;font-size:9.500px;-webkit-text-stroke:.2px;color:#e0e0e0">Ctrl+6</span>
<div class="a" style="left:1157px;top:796px;width:373px;height:1px;background:#454545"></div>
<div class="a" style="left:1163px;top:778px;width:12px;height:12px;border:1px solid #6a6a6a;border-top-color:#494949;border-left-color:#494949;background:#525252"></div>
<div class="a" style="left:1182px;top:772px;width:32px;height:23px;background:#000"></div>
<svg style="left:1182px;top:772px;opacity:0.6" width="32" height="23"><use href="#th"/></svg>
<span class="t" style="transform:scaleX(0.992);left:1219px;top:779px;font-size:9.500px;-webkit-text-stroke:.2px;color:#e6e6e6">LUCES 2</span>
<span class="t" style="transform:scaleX(1.117);left:1487px;top:779px;font-size:9.500px;-webkit-text-stroke:.2px;color:#e0e0e0">Ctrl+7</span>
<div class="a" style="left:1157px;top:824px;width:373px;height:1px;background:#454545"></div>
<div class="a" style="left:1163px;top:806px;width:12px;height:12px;border:1px solid #6a6a6a;border-top-color:#494949;border-left-color:#494949;background:#525252"></div>
<div class="a" style="left:1182px;top:800px;width:32px;height:23px;background:#000"></div>
<svg style="left:1182px;top:800px;opacity:0.28" width="32" height="23"><use href="#th"/></svg>
<span class="t" style="transform:scaleX(1.004);left:1219px;top:807px;font-size:9.500px;-webkit-text-stroke:.2px;color:#e6e6e6">lUCES 3</span>
<span class="t" style="transform:scaleX(1.117);left:1487px;top:807px;font-size:9.500px;-webkit-text-stroke:.2px;color:#e0e0e0">Ctrl+8</span>
<div class="a" style="left:1157px;top:852px;width:373px;height:1px;background:#454545"></div>
<div class="a" style="left:1163px;top:834px;width:12px;height:12px;border:1px solid #6a6a6a;border-top-color:#494949;border-left-color:#494949;background:#525252"></div>
<div class="a" style="left:1182px;top:828px;width:32px;height:23px;background:#000"></div>
<svg style="left:1182px;top:828px;opacity:0.12" width="32" height="23"><use href="#th"/></svg>
<span class="t" style="transform:scaleX(1.004);left:1219px;top:835px;font-size:9.500px;-webkit-text-stroke:.2px;color:#e6e6e6">lUCES 4</span>
<span class="t" style="transform:scaleX(1.117);left:1487px;top:835px;font-size:9.500px;-webkit-text-stroke:.2px;color:#e0e0e0">Ctrl+9</span>
<div class="a" style="left:1157px;top:880px;width:373px;height:1px;background:#454545"></div>
<div class="a" style="left:1163px;top:862px;width:12px;height:12px;border:1px solid #6a6a6a;border-top-color:#494949;border-left-color:#494949;background:#525252"></div>
<div class="a" style="left:1182px;top:856px;width:32px;height:23px;background:#000;box-shadow:inset 0 0 0 1px #2c2c2c"></div>
<div class="a" style="left:1187px;top:862px;width:14px;height:9px;background:#fff"></div>
<span class="t" style="transform:scaleX(1.058);left:1219px;top:863px;font-size:9.500px;-webkit-text-stroke:.2px;color:#e6e6e6">Alfa 1</span>
<div class="a" style="left:1157px;top:908px;width:373px;height:1px;background:#454545"></div>
<div class="a" style="left:1163px;top:890px;width:12px;height:12px;border:1px solid #6a6a6a;border-top-color:#494949;border-left-color:#494949;background:#525252"></div>
<div class="a" style="left:1182px;top:884px;width:32px;height:23px;background:#000;box-shadow:inset 0 0 0 1px #2c2c2c"></div>
<div class="a" style="left:1198px;top:893px;width:14px;height:9px;background:#fff"></div>
<span class="t" style="transform:scaleX(1.058);left:1219px;top:891px;font-size:9.500px;-webkit-text-stroke:.2px;color:#e6e6e6">Alfa 2</span>
<div class="a" style="left:1157px;top:936px;width:373px;height:1px;background:#454545"></div>
<div class="a" style="left:1163px;top:918px;width:12px;height:12px;border:1px solid #6a6a6a;border-top-color:#494949;border-left-color:#494949;background:#525252"></div>
<div class="a" style="left:1182px;top:912px;width:32px;height:23px;background:#000;box-shadow:inset 0 0 0 1px #2c2c2c"></div>
<div class="a" style="left:1197px;top:921px;width:4px;height:6px;background:#fff"></div>
<span class="t" style="transform:scaleX(1.058);left:1219px;top:919px;font-size:9.500px;-webkit-text-stroke:.2px;color:#e6e6e6">Alfa 3</span>
<div class="a" style="left:1157px;top:937px;width:373px;height:28px;background:#6b6b6b"></div>
<svg style="left:1163px;top:948px" width="13" height="9" viewBox="0 0 13 9"><path d="M0.300 4.500C2 1.500 4 0.300 6.500 0.300C9 0.300 11 1.500 12.700 4.500C11 7.500 9 8.700 6.500 8.700C4 8.700 2 7.500 0.300 4.500Z" fill="#f0f0f0"/><circle cx="6.500" cy="4.500" r="2.600" fill="#6b6b6b"/><circle cx="6.500" cy="4.500" r="1.300" fill="#f0f0f0"/></svg>
<div class="a" style="left:1182px;top:940px;width:32px;height:23px;background:#000;box-shadow:inset 0 0 0 1px #2c2c2c"></div>
<div class="a" style="left:1185px;top:944px;width:17px;height:12px;background:#6c6c6c"></div>
<span class="t" style="transform:scaleX(1.058);left:1219px;top:947px;font-size:9.500px;-webkit-text-stroke:.2px;color:#e6e6e6">Alfa 4</span>
<div class="a" style="left:1157px;top:992px;width:373px;height:1px;background:#454545"></div>
<div class="a" style="left:1163px;top:974px;width:12px;height:12px;border:1px solid #6a6a6a;border-top-color:#494949;border-left-color:#494949;background:#525252"></div>
<div class="a" style="left:1182px;top:968px;width:32px;height:23px;background:#000;box-shadow:inset 0 0 0 1px #2c2c2c"></div>
<div class="a" style="left:1194px;top:975px;width:19px;height:13px;background:#6c6c6c"></div>
<span class="t" style="transform:scaleX(1.058);left:1219px;top:975px;font-size:9.500px;-webkit-text-stroke:.2px;color:#e6e6e6">Alfa 5</span>
<svg style="left:1417px;top:1018px" width="12" height="12" viewBox="0 0 12 12"><circle cx="6" cy="6" r="5" fill="none" stroke="#dcdcdc" stroke-width="1.200" stroke-dasharray="1.800 1.400"/></svg>
<svg style="left:1445px;top:1019px" width="14" height="11" viewBox="0 0 14 11"><rect width="14" height="11" rx="1" fill="#dcdcdc"/><circle cx="7" cy="5.500" r="2.800" fill="#4a4a4a"/></svg>
<svg style="left:1479px;top:1019px" width="12" height="12" viewBox="0 0 12 12" fill="none" stroke="#dcdcdc" stroke-width="1.200"><rect x="0.600" y="0.600" width="10.800" height="10.800"/><path d="M6 3V9M3 6H9"/></svg>
<svg style="left:1507px;top:1017px" width="12" height="14" viewBox="0 0 12 14" fill="none" stroke="#dcdcdc" stroke-width="1.100"><path d="M0.500 3H11.500M4 3V1H8V3M1.800 3V13.400H10.200V3M4.300 5V11.500M6 5V11.500M7.700 5V11.500"/></svg>

<!-- Formación panel -->
<div class="a" style="left:1549px;top:69px;width:358px;height:27px;background:#424242"></div>
<div class="a" style="left:1549px;top:97px;width:358px;height:941px;background:#535353"></div>
<div class="a" style="left:1549px;top:69px;width:67px;height:28px;background:#535353"></div>
<span class="t b" style="transform:scaleX(1.046);left:1557px;top:78px;font-size:9.500px;-webkit-text-stroke:.2px;color:#f0f0f0">Formación</span>
<div class="a" style="left:1902px;top:79px;width:10px;height:7px;background:repeating-linear-gradient(to bottom,#c8c8c8 0 1px,transparent 1px 2px)"></div>
<div class="a" style="left:1905.500px;top:60px;width:3px;height:2px;background:#e0e0e0"></div>
<div class="a" style="left:1905.500px;top:63.500px;width:3px;height:2px;background:#e0e0e0"></div>
<span class="t" style="transform:scaleX(0.964);left:1658px;top:122px;font-size:17px;color:#fff;-webkit-text-stroke:.35px #fff">Descubra Photoshop</span>
<span class="t" style="transform:scaleX(0.965);left:1598px;top:152px;font-size:15px;color:#fff;-webkit-text-stroke:.35px #fff">Tutoriales paso a paso directamente en la</span>
<span class="t" style="transform:scaleX(0.972);left:1583px;top:172px;font-size:15px;color:#fff;-webkit-text-stroke:.35px #fff">aplicación. Seleccione un tema a continuación</span>
<span class="t" style="transform:scaleX(0.977);left:1684px;top:192px;font-size:15px;color:#fff;-webkit-text-stroke:.35px #fff">para comenzar.</span>
<!-- cards -->
<div class="card" style="top:228px"></div>
<div class="card" style="top:298px"></div>
<div class="card" style="top:368px"></div>
<div class="card" style="top:438px"></div>
<span class="t ct" style="transform:scaleX(0.950);top:251px">Habilidades básicas</span>
<span class="t ct" style="transform:scaleX(0.983);top:321px">Corregir una foto</span>
<span class="t ct" style="transform:scaleX(0.955);top:391px">Realizar efectos creativos</span>
<span class="t ct" style="transform:scaleX(0.989);top:461px">Pintura</span>
<svg class="chev" style="top:250px" width="9" height="16" viewBox="0 0 9 16"><path d="M1 1L8 8L1 15" stroke="#e6e6e6" stroke-width="1.300" fill="none"/></svg>
<svg class="chev" style="top:320px" width="9" height="16" viewBox="0 0 9 16"><path d="M1 1L8 8L1 15" stroke="#e6e6e6" stroke-width="1.300" fill="none"/></svg>
<svg class="chev" style="top:390px" width="9" height="16" viewBox="0 0 9 16"><path d="M1 1L8 8L1 15" stroke="#e6e6e6" stroke-width="1.300" fill="none"/></svg>
<svg class="chev" style="top:460px" width="9" height="16" viewBox="0 0 9 16"><path d="M1 1L8 8L1 15" stroke="#e6e6e6" stroke-width="1.300" fill="none"/></svg>
<!-- thumb 1: night room -->
<svg class="th" style="top:228px" width="100" height="60" viewBox="0 0 100 60">
<defs><radialGradient id="rm" cx="0.520" cy="0.550" r="0.700"><stop offset="0" stop-color="#232a4c"/><stop offset="1" stop-color="#0c0e1c"/></radialGradient><clipPath id="rc"><path d="M3 0H100V60H3A3 3 0 0 1 0 57V3A3 3 0 0 1 3 0Z"/></clipPath></defs>
<g clip-path="url(#rc)"><rect width="100" height="60" fill="url(#rm)"/>
<path d="M0 0H100V6L90 13H12L0 8Z" fill="#10142c"/><path d="M0 48L14 42H88L100 50V60H0Z" fill="#141932"/>
<rect x="20" y="19" width="18" height="20" fill="#1a2244"/><rect x="21" y="20" width="7" height="18" fill="#27335e"/><rect x="29" y="20" width="8" height="18" fill="#0c1024"/>
<rect x="45" y="15" width="13" height="31" fill="#0b0e20"/><path d="M48 17L57 16V45L48 43Z" fill="#8d9bd0"/><path d="M49 18L56 17V30L49 30Z" fill="#aab6e6"/>
<rect x="63" y="15" width="8" height="16" fill="#2a2f58"/><rect x="2" y="19" width="5" height="10" fill="#2a3260"/><rect x="9" y="21" width="5" height="9" fill="#3a4478"/>
<circle cx="76" cy="16" r="3.500" fill="#2c3564"/><circle cx="84" cy="22" r="4.500" fill="#38427a"/><circle cx="88" cy="17" r="3" fill="#4a4a6c"/><circle cx="93" cy="20" r="4" fill="#161a36"/>
<path d="M68 42C72 36 80 36 90 40L100 44V58H84C76 54 70 50 68 42Z" fill="#2c3560"/><path d="M70 41C76 38 84 39 98 46" stroke="#56629a" stroke-width="1.200" fill="none"/>
<rect x="18" y="38" width="22" height="9" fill="#141a38"/><rect x="22" y="37" width="14" height="2" fill="#4a5a98"/>
<path d="M46 46H60L66 56H44Z" fill="#2a356a" opacity=".6"/><circle cx="50" cy="5" r="1.300" fill="#9ab0e0"/>
</g></svg>
<!-- thumb 2: flowers -->
<svg class="th" style="top:298px" width="100" height="60" viewBox="0 0 100 60">
<defs><clipPath id="fc"><path d="M3 0H100V60H3A3 3 0 0 1 0 57V3A3 3 0 0 1 3 0Z"/></clipPath><linearGradient id="fbg" x1="0" x2="1"><stop offset="0" stop-color="#d8c8b8"/><stop offset="0.450" stop-color="#efe8e4"/><stop offset="1" stop-color="#f3e2e2"/></linearGradient></defs>
<g clip-path="url(#fc)"><rect width="100" height="60" fill="url(#fbg)"/>
<rect x="0" y="9" width="24" height="3" fill="#e6c9a6"/><rect x="3" y="4" width="6" height="6" rx="2" fill="#2a2422"/><rect x="12" y="12" width="4" height="26" fill="#e9d2b8"/>
<path d="M30 60V14C32 4 40 0 52 0C64 0 72 4 74 14V60Z" fill="#f3f1f0"/><path d="M40 0H72C72 6 66 8 62 5C58 9 50 6 46 3Z" fill="#3b2a22"/><path d="M50 0H62V5C58 8 53 7 50 0Z" fill="#e6bfa8"/>
<path d="M30 30C34 28 42 34 46 40L38 44Z" fill="#e8c4ac"/>
<circle cx="92" cy="16" r="9" fill="#f6b6bc" opacity=".7"/><circle cx="97" cy="34" r="7" fill="#f2c8cc" opacity=".6"/>
<g><circle cx="50" cy="24" r="6" fill="#5f7a33"/><circle cx="62" cy="20" r="6" fill="#d8a8c0"/><circle cx="72" cy="22" r="4.500" fill="#4a38a6"/><circle cx="76" cy="29" r="3.500" fill="#5a46b0"/><circle cx="44" cy="30" r="5" fill="#8a2a5c"/><circle cx="54" cy="32" r="6" fill="#7a2450"/><circle cx="64" cy="30" r="5" fill="#6a8a3a"/>
<circle cx="60" cy="40" r="6" fill="#e9a21c"/><circle cx="70" cy="38" r="6" fill="#f0b030"/><circle cx="66" cy="48" r="6" fill="#e08a18"/><circle cx="76" cy="46" r="5" fill="#f2b640"/><circle cx="52" cy="42" r="5" fill="#5a2a58"/><circle cx="56" cy="50" r="6" fill="#688a36"/><circle cx="72" cy="55" r="5" fill="#7a9a40"/><circle cx="48" cy="36" r="3" fill="#4f6a2a"/></g>
<g><circle cx="8" cy="34" r="5" fill="#e58a20"/><circle cx="4" cy="42" r="5" fill="#6a8a36"/><circle cx="13" cy="44" r="5" fill="#e07a18"/><circle cx="19" cy="36" r="4" fill="#5a7a30"/><circle cx="22" cy="46" r="4" fill="#e9a030"/><circle cx="10" cy="52" r="5" fill="#7a9a3c"/><circle cx="24" cy="30" r="2.500" fill="#8a3a6a"/></g>
<path d="M8 60V55H88V60Z" fill="#dcb88e"/>
</g></svg>
<!-- thumb 3: desk & pencil -->
<svg class="th" style="top:368px" width="100" height="60" viewBox="0 0 100 60">
<defs><clipPath id="dc"><path d="M3 0H100V60H3A3 3 0 0 1 0 57V3A3 3 0 0 1 3 0Z"/></clipPath></defs>
<g clip-path="url(#dc)"><rect width="100" height="60" fill="#3a241c"/>
<rect x="58" y="0" width="42" height="60" fill="#4e3228"/><rect x="91" y="0" width="9" height="60" fill="#a07458"/><rect x="94" y="30" width="6" height="30" fill="#d0a484"/>
<rect x="0" y="0" width="22" height="44" fill="#161616"/><rect x="2" y="10" width="18" height="12" fill="#232a33"/><rect x="2" y="26" width="18" height="10" fill="#1d2a20"/><rect x="0" y="4" width="14" height="3" fill="#d8c030"/>
<path d="M24 0L30 30M28 0L34 32M34 0L37 30M22 6L28 30" stroke="#c9c2c0" stroke-width="1.400"/><path d="M30 14L36 34M26 16L32 34" stroke="#b82a30" stroke-width="1.800"/>
<ellipse cx="46" cy="6" rx="9" ry="7" fill="#8f1620"/><path d="M58 0L44 22" stroke="#d8b060" stroke-width="2.500"/><path d="M62 0L48 24" stroke="#a83a38" stroke-width="2"/>
<rect x="62" y="2" width="30" height="34" fill="#241812"/><rect x="66" y="7" width="20" height="26" fill="#b8912a"/><path d="M70 32C70 18 72 12 76 12C80 12 82 18 82 32Z" fill="#b0488a"/>
<rect x="0" y="44" width="100" height="16" fill="#4c5e4c"/>
<path d="M12 44L30 30L56 34L90 46L74 60H36Z" fill="#f2efe8"/><path d="M12 44L36 60H30L12 50Z" fill="#d9d2c4"/><path d="M70 42L78 47" stroke="#d0284a" stroke-width="1.500"/>
<ellipse cx="9" cy="52" rx="10" ry="6" fill="#c9c6c0"/><ellipse cx="9" cy="50" rx="10" ry="5" fill="#e2dfd8"/>
<path d="M36 60V38L52 13L69 38V60Z" fill="#0c4a94"/><path d="M40 60V40L52 21L65 40V60Z" fill="#a9d0f0"/><path d="M47 29L52 21L57 29L55 33L52 30L49 33Z" fill="#1f78b8"/><path d="M41 39L47 29L49 33L52 30L55 33L57 29L64 39L60 43L56 38L52 43L48 38L44 43Z" fill="#f6f8fb"/><rect x="49" y="48" width="8" height="12" rx="3" fill="#1a6fc0"/><path d="M52 60V40" stroke="#8ab8e0" stroke-width="0.800"/>
</g></svg>
<!-- thumb 4: fish painting -->
<svg class="th" style="top:438px" width="100" height="60" viewBox="0 0 100 60">
<defs><clipPath id="pc"><path d="M3 0H100V60H3A3 3 0 0 1 0 57V3A3 3 0 0 1 3 0Z"/></clipPath>
<pattern id="chk" width="2" height="2" patternUnits="userSpaceOnUse"><rect width="2" height="2" fill="#f4f0ec"/><rect width="1" height="1" fill="#d82030"/><rect x="1" y="1" width="1" height="1" fill="#d82030"/></pattern>
<pattern id="chb" width="2" height="2" patternUnits="userSpaceOnUse"><rect width="2" height="2" fill="#f4f0ec"/><rect width="1" height="1" fill="#3a50b0"/><rect x="1" y="1" width="1" height="1" fill="#3a50b0"/></pattern>
<linearGradient id="fsh" x1="0" y1="0" x2="1" y2="1"><stop offset="0" stop-color="#6a6e8c"/><stop offset="0.500" stop-color="#b0b6d2"/><stop offset="1" stop-color="#7a80a4"/></linearGradient></defs>
<g clip-path="url(#pc)"><rect width="100" height="60" fill="#d8141e"/>
<path d="M36 10H92M36 22H92M36 33H92M36 44H92M36 54H92" stroke="#e8485a" stroke-width="0.800"/>
<rect x="0" y="0" width="27" height="52" fill="#8c5a30"/><rect x="0" y="0" width="10" height="30" fill="#4a3020"/><rect x="4" y="10" width="12" height="8" fill="#3a2418"/><rect x="10" y="26" width="16" height="24" fill="#4a2a28"/><rect x="0" y="34" width="12" height="18" fill="#2a1a14"/><rect x="14" y="4" width="12" height="10" fill="#b07a40"/>
<rect x="26" y="0" width="4" height="52" fill="#d8c070"/><rect x="30" y="0" width="6" height="12" fill="url(#chk)"/><rect x="30" y="12" width="6" height="20" fill="url(#chb)"/><rect x="30" y="32" width="6" height="22" fill="url(#chk)"/>
<rect x="0" y="52" width="36" height="8" fill="#e8a060"/><path d="M2 53L8 59H14L8 53ZM16 53L22 59H28Z" fill="#2a8aa0"/><rect x="30" y="54" width="6" height="6" fill="#40b0b0"/>
<path d="M92 4C70 12 56 22 46 31C46 34 48 36 50 38C60 44 76 48 92 50Z" fill="url(#fsh)"/><path d="M92 4C70 12 56 22 46 31" stroke="#3a3a4a" stroke-width="1.600" fill="none"/><path d="M48 34C54 36 58 35 62 37" stroke="#4a4a60" stroke-width="0.800" fill="none"/>
<circle cx="67.500" cy="27" r="5" fill="#e8d8a0"/><circle cx="67.500" cy="27" r="3.300" fill="#3a2818"/><circle cx="66.500" cy="26" r="0.900" fill="#fff"/>
<circle cx="55" cy="17" r="2.200" fill="#48c0c0"/><circle cx="64" cy="0.500" r="2.500" fill="#48c0c0"/>
<rect x="92" y="0" width="8" height="60" fill="#c8b46a"/><rect x="94" y="0" width="3" height="56" fill="#a8c890"/><path d="M93 0V56M98 0V56" stroke="#d86a50" stroke-width="0.800" stroke-dasharray="1 1"/><rect x="90" y="56" width="10" height="4" fill="#4a8a40"/>
</g></svg>

<!-- alert dialog -->
<div class="a" style="left:476px;top:765px;width:341px;height:118px;background:#fff"></div>
<span class="t" style="transform:scaleX(1.017);left:484px;top:774px;font-size:12px;color:#000">Adobe Photoshop</span>
<svg style="left:486px;top:805px" width="32" height="32" viewBox="0 0 32 32"><defs><linearGradient id="wg" x1="0" y1="0" x2="0" y2="1"><stop offset="0" stop-color="#ffe24a"/><stop offset="1" stop-color="#ffc20a"/></linearGradient></defs><path d="M16 1.500L31 30.500H1Z" fill="url(#wg)" stroke="#f2a900" stroke-width="1" stroke-linejoin="round"/><rect x="15" y="11.500" width="2.200" height="11" fill="#111"/><rect x="15" y="24.500" width="2.200" height="2.400" fill="#111"/></svg>
<span class="t" style="transform:scaleX(0.901);left:533px;top:807px;font-size:12px;color:#111;font-family:'DejaVu Sans','Liberation Sans',sans-serif">Aviso: No hay píxeles seleccionados en más de un</span>
<span class="t" style="transform:scaleX(0.912);left:533px;top:821px;font-size:12px;color:#111;font-family:'DejaVu Sans','Liberation Sans',sans-serif">50%. No se verán los bordes de la selección.</span>
<div class="a" style="left:601px;top:854px;width:99px;height:20px;background:#e1e1e1;border:2px solid #0078d7"></div>
<div class="a" style="left:604px;top:857px;width:93px;height:14px;border:1px dotted #111"></div>
<span class="t" style="transform:scaleX(0.980);left:642px;top:858px;font-size:12px;color:#000">OK</span>

<!--BOTTOMLINE--><div class="a" style="left:0;top:1037px;width:1907px;height:1px;background:#3c3c3c"></div>
</body></html>
